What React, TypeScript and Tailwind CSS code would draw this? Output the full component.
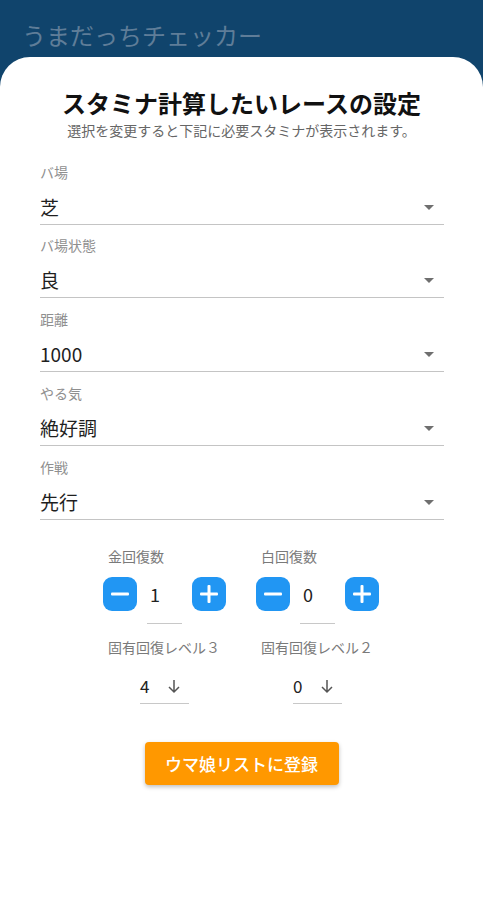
import React from "react";

const font = { fontFamily: '"Noto Sans CJK JP", "Noto Sans", sans-serif' };

function Field({ label, value, gap }: { label: string; value: string; gap: string }) {
  return (
    <div className={gap}>
      <div className="text-[14px] leading-[16px] text-[#8f8f8f]">{label}</div>
      <div className="mt-[15px] flex items-center justify-between border-b border-[#c4c4c4] pb-[5px]">
        <span className="text-[19px] leading-[24px] text-[#1f1f1f]">{value}</span>
        <svg width="10" height="5" viewBox="0 0 10 5" className="mr-[10px]">
          <path d="M0 0 L10 0 L5 5 Z" fill="#6f6f6f" />
        </svg>
      </div>
    </div>
  );
}

function SquareBtn({ kind }: { kind: "minus" | "plus" }) {
  return (
    <div className="flex h-[34px] w-[34px] items-center justify-center rounded-[9px] bg-[#2196f3]">
      <svg width="20" height="20" viewBox="0 0 20 20">
        <rect x="1" y="8.5" width="18" height="3" rx="1" fill="white" />
        {kind === "plus" && <rect x="8.5" y="1" width="3" height="18" rx="1" fill="white" />}
      </svg>
    </div>
  );
}

function Counter({ label, value }: { label: string; value: string }) {
  return (
    <div className="w-[124px]">
      <div className="pl-[5px] text-[14px] leading-[18px] text-[#7a7a7a]">{label}</div>
      <div className="mt-[12px] flex items-start">
        <SquareBtn kind="minus" />
        <div className="mx-[10px] h-[47px] w-[35px] border-b border-[#c8c8c8] pl-[3px] pt-[5px] text-[18px] leading-[24px] text-[#222]">
          {value}
        </div>
        <SquareBtn kind="plus" />
      </div>
    </div>
  );
}

function Level({ label, value }: { label: string; value: string }) {
  return (
    <div className="w-[124px]">
      <div className="pl-[5px] text-[14px] leading-[18px] text-[#7a7a7a] whitespace-nowrap">{label}</div>
      <div className="ml-[37px] mt-[18px] flex w-[49px] items-center border-b border-[#c8c8c8] pb-[5px]">
        <span className="text-[17px] leading-[24px] text-[#222]">{value}</span>
        <svg width="14" height="16" viewBox="0 0 14 16" className="ml-[18px]">
          <path d="M7 2 L7 14 M2 9 L7 14 L12 9" stroke="#555" strokeWidth="1.5" fill="none" />
        </svg>
      </div>
    </div>
  );
}

export default function App() {
  return (
    <div style={font} className="min-h-[900px] w-full bg-[#10446c]">
      <div className="h-[57px] pl-[22px] pt-[19px] text-[24px] leading-[32px] text-[#5f7d98]">
        うまだっちチェッカー
      </div>
      <div className="min-h-[843px] rounded-t-[30px] bg-white">
        <div className="pt-[30px] text-center text-[24px] font-bold leading-[32px] text-[#111]">
          スタミナ計算したいレースの設定
        </div>
        <div className="mt-[2px] text-center text-[14px] leading-[18px] text-[#666]">
          選択を変更すると下記に必要スタミナが表示されます。
        </div>
        <div className="mx-[40px] mt-[25px] w-[404px]">
          <Field label="バ場" value="芝" gap="mt-0" />
          <Field label="バ場状態" value="良" gap="mt-[12px]" />
          <Field label="距離" value="1000" gap="mt-[13px]" />
          <Field label="やる気" value="絶好調" gap="mt-[13px]" />
          <Field label="作戦" value="先行" gap="mt-[13px]" />
        </div>
        <div className="mt-[27px] flex justify-center gap-[29px]">
          <Counter label="金回復数" value="1" />
          <Counter label="白回復数" value="0" />
        </div>
        <div className="mt-[14px] flex justify-center gap-[29px]">
          <Level label="固有回復レベル３" value="4" />
          <Level label="固有回復レベル２" value="0" />
        </div>
        <div className="mt-[38px] flex justify-center">
          <button className="h-[43px] w-[194px] rounded-[4px] bg-[#ff9800] text-[17px] font-medium text-white shadow-[0_2px_4px_rgba(0,0,0,0.25)]">
            ウマ娘リストに登録
          </button>
        </div>
      </div>
    </div>
  );
}
